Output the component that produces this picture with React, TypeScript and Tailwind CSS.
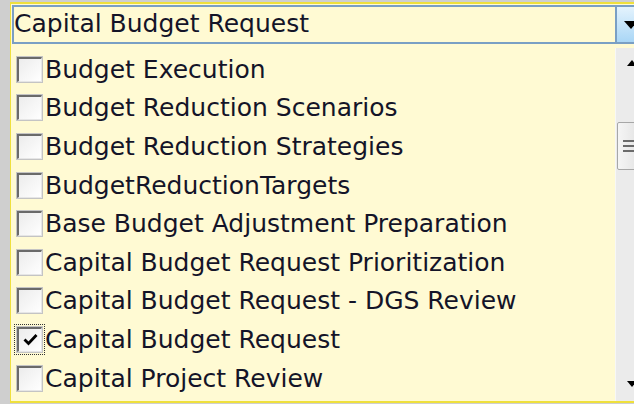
import React from "react";

const items: { label: string; checked?: boolean }[] = [
  { label: "Budget Execution" },
  { label: "Budget Reduction Scenarios" },
  { label: "Budget Reduction Strategies" },
  { label: "BudgetReductionTargets" },
  { label: "Base Budget Adjustment Preparation" },
  { label: "Capital Budget Request Prioritization" },
  { label: "Capital Budget Request - DGS Review" },
  { label: "Capital Budget Request", checked: true },
  { label: "Capital Project Review" },
];

function CheckBox({ checked }: { checked?: boolean }) {
  const box = (
    <div className="w-[27px] h-[27px] border border-[#c4c4c4] bg-[#f4f4f4]">
      <div className="w-full h-full border-t-2 border-l-2 border-t-[#6a6a6a] border-l-[#6a6a6a] border-r border-b border-r-[#e6e6e6] border-b-[#e6e6e6] bg-gradient-to-br from-[#ececec] to-white flex items-center justify-center">
        {checked && (
          <svg width="15" height="13" viewBox="0 0 15 13">
            <path d="M1.5 6.5 L5.5 10.5 L13.5 2" fill="none" stroke="#000" strokeWidth="2.8" />
          </svg>
        )}
      </div>
    </div>
  );
  if (checked) {
    return (
      <div className="border border-dotted border-[#333] p-px -m-[2px]">
        {box}
      </div>
    );
  }
  return box;
}

function Triangle({ down, className }: { down?: boolean; className?: string }) {
  return (
    <svg width="10" height="6" viewBox="0 0 10 6" className={className}>
      <path d={down ? "M0 0 H10 L5 6 Z" : "M0 6 H10 L5 0 Z"} fill="#000" />
    </svg>
  );
}

export default function App() {
  return (
    <div
      className="w-[634px] h-[404px] overflow-hidden bg-[#cfcfcf] pt-[2px] pl-[10px]"
      style={{ fontFamily: '"DejaVu Sans", Verdana, sans-serif' }}
    >
      <div className="w-[640px] h-[401px] border-t-2 border-l border-b-2 border-[#efe03c] bg-[#fffad3] pt-px pl-px flex flex-col">
        {/* combo box header */}
        <div className="h-[39px] flex border-y-2 border-l-2 border-[#7a9fc4]">
          <div className="w-[601px] flex items-center text-[25px] leading-none text-[#141428] pb-[3px]">
            Capital Budget Request
          </div>
          <div className="w-[2px] bg-[#7a9fc4]" />
          <div className="flex-1 bg-gradient-to-b from-[#e4f3fd] to-[#a9d6f6] flex items-center pl-[7px]">
            <svg width="14" height="8" viewBox="0 0 14 8">
              <path d="M0 0 H14 L7 8 Z" fill="#000" />
            </svg>
          </div>
        </div>

        {/* list with scrollbar */}
        <div className="flex flex-1 mt-[4px]">
          <div className="w-[603px] pl-[4px] pt-[2px]">
            {items.map((it) => (
              <div key={it.label} className="h-[38.6px] flex items-center gap-[2px]">
                <CheckBox checked={it.checked} />
                <span className="text-[25px] leading-none text-[#141428] whitespace-nowrap">
                  {it.label}
                </span>
              </div>
            ))}
          </div>
          <div className="w-[24px] bg-[#ebebeb] border-l border-[#f7f7f7] flex flex-col items-center relative">
            <Triangle className="mt-[12px] ml-[8px]" />
            <div className="absolute left-[1px] top-[74px] w-[30px] h-[48px] border border-[#a7a7a7] rounded-[2px] bg-gradient-to-r from-[#f5f5f5] to-[#dedede] flex flex-col justify-center gap-[3px] pl-[5px]">
              <div className="h-[2px] w-[12px] bg-[#6b6b6b]" />
              <div className="h-[2px] w-[12px] bg-[#6b6b6b]" />
              <div className="h-[2px] w-[12px] bg-[#6b6b6b]" />
            </div>
            <div className="flex-1" />
            <Triangle down className="mb-[14px] ml-[8px]" />
          </div>
        </div>
      </div>
    </div>
  );
}
